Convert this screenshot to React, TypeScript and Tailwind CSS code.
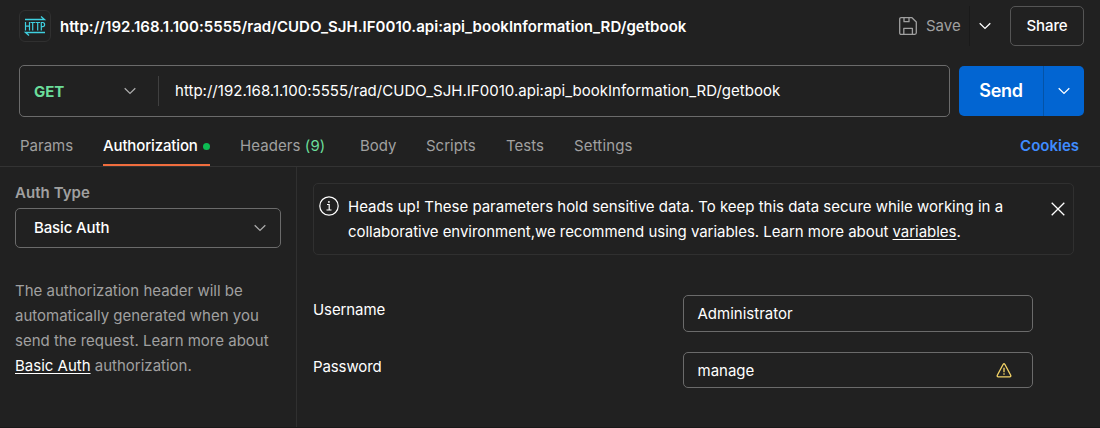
import type { ReactNode } from "react";

function Chevron({ className }: { className: string }) {
  return (
    <svg viewBox="0 0 12 8" className={`h-2 w-3 ${className}`} fill="none" stroke="currentColor" strokeWidth="1.3">
      <path d="M.7 1.2 6 6.4l5.300-5.200" />
    </svg>
  );
}

function HttpIcon() {
  return (
    <svg viewBox="0 0 32 32" className="h-8 w-8 shrink-0" fill="none" stroke="#3fd0e0" strokeWidth="1.300">
      <path d="M6 9.500h19.500l-3.500-3M26 22.500H6.500l3.500 3" />
      <path d="M6.500 12v8.500M10.500 12v8.500M6.500 16.200h4M11.500 12.500h4.500M13.700 12.500v8M16.500 12.500h4.500M18.700 12.500v8M22.300 20.500v-8h1.400a1.900 2.100 0 0 1 0 4.200h-1.400" strokeWidth="1.200" />
    </svg>
  );
}

function SaveIcon() {
  return (
    <svg viewBox="0 0 18 18" className="h-[18px] w-[18px]" fill="none" stroke="#a0a0a0" strokeWidth="1.300" strokeLinejoin="round">
      <path d="M.7 2.200Q.7.700 2.200.700H13l4.300 4.300v10.800q0 1.500-1.500 1.500H2.200q-1.500 0-1.500-1.500z" />
      <path d="M5 .7v4h5v-4M4.800 17.300v-6h8.600v6" />
    </svg>
  );
}

function InfoIcon() {
  return (
    <svg viewBox="0 0 20 20" className="h-5 w-5 shrink-0" fill="none" stroke="#fff" strokeWidth="1.200">
      <circle cx="10" cy="10" r="9.200" />
      <path d="M8 8.500h2.200V14M7.500 14h5" />
      <circle cx="9.900" cy="5.900" r=".9" fill="#fff" stroke="none" />
    </svg>
  );
}

function WarningIcon() {
  return (
    <svg viewBox="0 0 16 15" className="h-[15px] w-4" fill="none" stroke="#f2d266" strokeWidth="1.350" strokeLinejoin="round">
      <path d="M7.200 1.300q.8-1.200 1.600 0l5.900 11q.5 1.400-1 1.600H2.300q-1.500-.2-1-1.600z" />
      <path d="M8 4.700v4.600M8 10.300v1.500" />
    </svg>
  );
}

function Tab({ children, className = "" }: { children: ReactNode; className?: string }) {
  return <div className={`shrink-0 whitespace-nowrap ${className}`}>{children}</div>;
}

export default function App() {
  return (
    <div className="flex h-[428px] w-[1100px] flex-col overflow-hidden border-b border-[#191919] bg-[#212121] font-['Inter',sans-serif] text-[15px] leading-[25px] text-white">
      <header className="flex h-[65px] items-start pr-4 pl-[19px]">
        <div className="mt-[10px] flex h-8 w-8 items-center justify-center rounded-md border border-[#303030]">
          <HttpIcon />
        </div>
        <h1 className="mt-[14px] ml-[9px] text-[15px] font-semibold tracking-[0.037px] whitespace-nowrap">
          http://192.168.1.100:5555/rad/CUDO_SJH.IF0010.api:api_bookInformation_RD/getbook
        </h1>
        <div className="mt-[6px] ml-auto flex h-10 items-center">
          <button className="flex h-full items-center gap-[9px] border-r border-[#1a1a1a] pr-[9px] text-[#a0a0a0]">
            <SaveIcon />
            <span className="-mt-px w-[34px]">Save</span>
          </button>
          <button className="mr-[19px] ml-[9px]">
            <Chevron className="text-white" />
          </button>
          <button className="h-10 w-[74px] rounded-[5px] border border-[#555] pb-px font-medium tracking-[-0.1px]">Share</button>
        </div>
      </header>

      <div className="flex h-[52px] shrink-0 items-center pr-4 pl-[19px]">
        <div className="flex h-[52px] w-[931px] items-center rounded-[5px] border border-[#6b6b6b]">
          <button className="flex w-[138px] items-center justify-between pr-[22px] pl-[14px] font-bold text-[#6bdd9a]">
            GET
            <Chevron className="text-[#aaa]" />
          </button>
          <div className="h-[30px] w-px bg-[#404040]" />
          <span className="ml-4 pb-px tracking-[0.022px] whitespace-nowrap">
            http://192.168.1.100:5555/rad/CUDO_SJH.IF0010.api:api_bookInformation_RD/getbook
          </span>
        </div>
        <div className="ml-[9px] flex h-[50px] w-[125px] overflow-hidden rounded-[5px] bg-[#0265d2]">
          <button className="w-[84px] text-lg font-semibold tracking-[-0.25px]">Send</button>
          <button className="flex flex-1 items-center justify-center border-l border-[#0453a7]">
            <Chevron className="text-white" />
          </button>
        </div>
      </div>

      <nav className="flex h-[50px] shrink-0 gap-[30px] border-b border-[#333] pr-[21px] pl-5 pt-4 text-[#a0a0a0]">
        <Tab className="w-[53px]">Params</Tab>
        <Tab className="flex h-[33px] w-[107px] border-b-2 border-[#f06d3e] font-medium tracking-[-0.14px] text-white">
          Authorization
          <span className="mt-[10px] ml-auto h-[7px] w-[7px] rounded-full bg-[#0cbb52]" />
        </Tab>
        <Tab className="w-[90px] tracking-[0.08px]">
          Headers <span className="text-[#6bdd9a]">(9)</span>
        </Tab>
        <Tab className="w-9">Body</Tab>
        <Tab className="w-[50px]">Scripts</Tab>
        <Tab className="w-[38px]">Tests</Tab>
        <Tab className="tracking-[0.15px]">Settings</Tab>
        <a className="ml-auto font-semibold text-[#3f8cff]">Cookies</a>
      </nav>

      <div className="flex min-h-0 flex-1">
        <aside className="w-[297px] shrink-0 border-r border-[#303030] pt-[13px] pl-[15px]">
          <div className="font-semibold tracking-[0.05px] text-[#a0a0a0]">Auth Type</div>
          <button className="mt-[3px] flex h-10 w-[266px] items-center justify-between rounded-[5px] border border-[#6b6b6b] pr-[14px] pl-[18px] font-medium">
            <span className="-mt-px tracking-[-0.13px]">Basic Auth</span>
            <Chevron className="text-[#aaa]" />
          </button>
          <p className="mt-[30px] text-[#a0a0a0]">
            The authorization header will be
            <br />
            automatically generated when you
            <br />
            send the request. Learn more about
            <br />
            <a className="text-white underline underline-offset-2">Basic Auth</a> authorization.
          </p>
        </aside>
        <main className="flex-1 pl-4 pt-4">
          <div className="flex h-[72px] w-[761px] rounded-[5px] border border-[#303030] pr-2 pl-[5px]">
            <div className="pt-3">
              <InfoIcon />
            </div>
            <p className="ml-[9px] pt-[10px] whitespace-nowrap">
              <span className="tracking-[-0.01px]">Heads up! These parameters hold sensitive data. To keep this data secure while working in a</span>
              <br />
              <span className="tracking-[-0.035px]">
                collaborative environment,we recommend using variables. Learn more about{" "}
                <a className="underline underline-offset-2">variables</a>.
              </span>
            </p>
            <svg viewBox="0 0 14 14" className="mt-[18px] ml-auto h-[14px] w-[14px]" stroke="#fff" strokeWidth="1.300">
              <path d="m.7.700 12.600 12.600M13.300.700.700 13.300" />
            </svg>
          </div>
          <div className="mt-10 flex w-[720px] justify-between">
            <label className="mt-[2px] tracking-[-0.1px]">Username</label>
            <div className="flex h-[37px] w-[350px] items-center rounded-[5px] border border-[#6b6b6b] pl-[13.5px]">Administrator</div>
          </div>
          <div className="mt-5 flex w-[720px] justify-between">
            <label className="mt-[2px] tracking-[-0.1px]">Password</label>
            <div className="flex h-9 w-[350px] items-center justify-between rounded-[5px] border border-[#6b6b6b] pr-[20.5px] pl-[13.5px]">
              manage
              <WarningIcon />
            </div>
          </div>
        </main>
      </div>
    </div>
  );
}
